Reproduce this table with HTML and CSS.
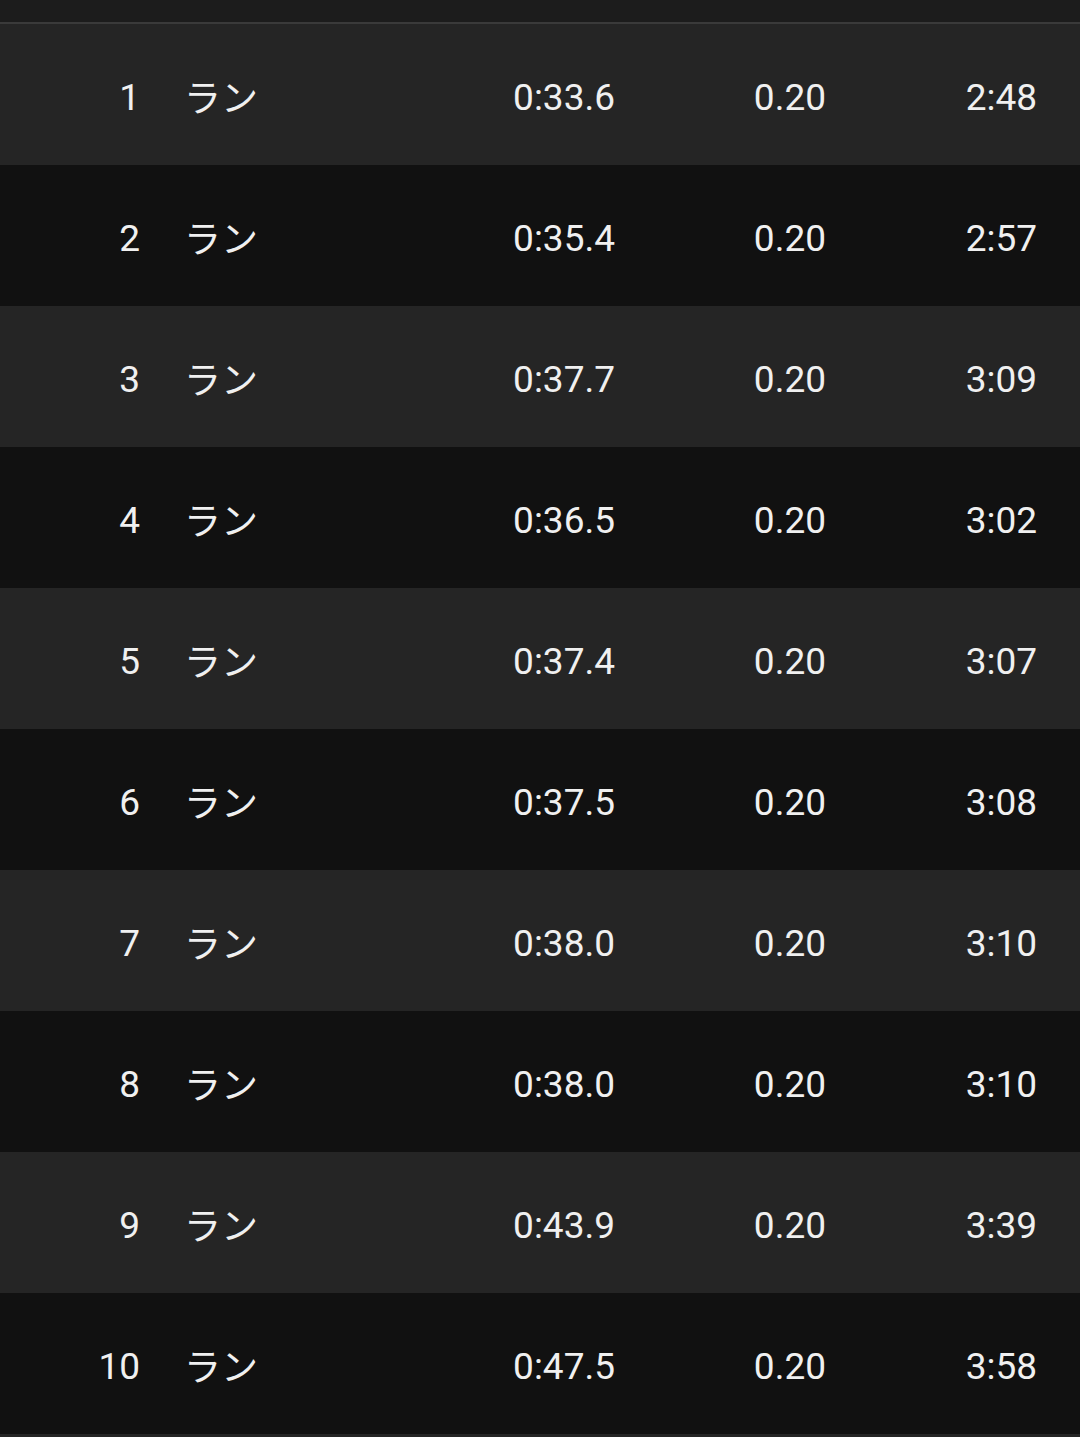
FILE: index.html
```html
<!DOCTYPE html>
<html lang="ja">
<head>
<meta charset="utf-8">
<link rel="stylesheet" href="styles.css">
</head>
<body>
<div class="top"></div>
<div class="table">
  <div class="row odd"><span class="c-no">1</span><span class="c-type">ラン</span><span class="c-time">0:33.6</span><span class="c-dist">0.20</span><span class="c-pace">2:48</span></div>
  <div class="row even"><span class="c-no">2</span><span class="c-type">ラン</span><span class="c-time">0:35.4</span><span class="c-dist">0.20</span><span class="c-pace">2:57</span></div>
  <div class="row odd"><span class="c-no">3</span><span class="c-type">ラン</span><span class="c-time">0:37.7</span><span class="c-dist">0.20</span><span class="c-pace">3:09</span></div>
  <div class="row even"><span class="c-no">4</span><span class="c-type">ラン</span><span class="c-time">0:36.5</span><span class="c-dist">0.20</span><span class="c-pace">3:02</span></div>
  <div class="row odd"><span class="c-no">5</span><span class="c-type">ラン</span><span class="c-time">0:37.4</span><span class="c-dist">0.20</span><span class="c-pace">3:07</span></div>
  <div class="row even"><span class="c-no">6</span><span class="c-type">ラン</span><span class="c-time">0:37.5</span><span class="c-dist">0.20</span><span class="c-pace">3:08</span></div>
  <div class="row odd"><span class="c-no">7</span><span class="c-type">ラン</span><span class="c-time">0:38.0</span><span class="c-dist">0.20</span><span class="c-pace">3:10</span></div>
  <div class="row even"><span class="c-no">8</span><span class="c-type">ラン</span><span class="c-time">0:38.0</span><span class="c-dist">0.20</span><span class="c-pace">3:10</span></div>
  <div class="row odd"><span class="c-no">9</span><span class="c-type">ラン</span><span class="c-time">0:43.9</span><span class="c-dist">0.20</span><span class="c-pace">3:39</span></div>
  <div class="row even"><span class="c-no">10</span><span class="c-type">ラン</span><span class="c-time">0:47.5</span><span class="c-dist">0.20</span><span class="c-pace">3:58</span></div>
  <div class="row odd"></div>
</div>
</body>
</html>
```

FILE: styles.css
```css
html, body {
  margin: 0;
  padding: 0;
  background: #111111;
}
body {
  font-family: Roboto, "Noto Sans CJK JP", sans-serif;
  color: #f0f0f0;
  overflow: hidden;
  height: 1437px;
}
.top {
  height: 22px;
  background: #1c1c1c;
  border-bottom: 2px solid #3a3a3a;
}
.row {
  box-sizing: border-box;
  height: 141px;
  padding-top: 5px;
  display: grid;
  grid-template-columns: 140px 335px 140px 211px 211px;
  align-items: center;
  font-size: 37px;
}
.odd { background: #252525; }
.even { background: #111111; }
.c-no { text-align: right; }
.c-type {
  padding-left: 44px;
  padding-bottom: 3px;
  font-family: "Noto Sans CJK JP", sans-serif;
  font-size: 37px;
}
.c-time, .c-dist, .c-pace { text-align: right; }
```
